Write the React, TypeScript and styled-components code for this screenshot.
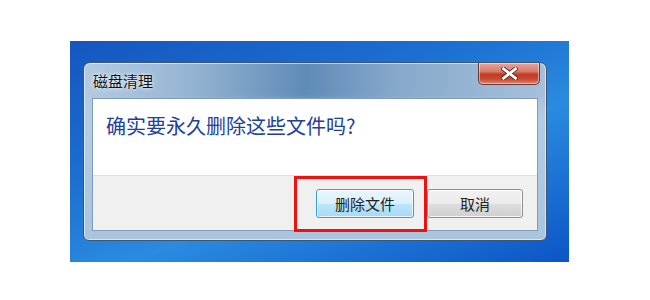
import React from "react";
import styled, { createGlobalStyle } from "styled-components";

const Global = createGlobalStyle`
  html, body { margin: 0; padding: 0; background: #ffffff; }
  body { font-family: "Noto Sans CJK SC", "Microsoft YaHei", sans-serif; }
`;

const Page = styled.div`
  width: 650px;
  height: 300px;
  padding: 41px 0 0 70px;
  box-sizing: border-box;
`;

const Desktop = styled.div`
  width: 499px;
  height: 221px;
  box-sizing: border-box;
  padding: 21px 0 0 13px;
  background: linear-gradient(160deg, #1556c0 0%, #1c6fd0 35%, #2a8be0 60%, #0c55c6 100%);
`;

const Window = styled.div`
  position: relative;
  width: 464px;
  height: 179px;
  box-sizing: border-box;
  border: 1px solid #3c5674;
  border-radius: 7px 7px 6px 6px;
  background:
    linear-gradient(180deg, rgba(255, 255, 255, 0) 0%, rgba(255, 255, 255, 0) 18%, rgba(180, 205, 230, 1) 30%, rgba(170, 196, 222, 1) 100%),
    linear-gradient(90deg, #b3cbe2 0%, #97b5d3 22%, #5f8bb8 48%, #87a9cb 68%, #a6c0db 100%);
  box-shadow: inset 0 0 0 1px rgba(255, 255, 255, 0.55);
  display: flex;
  flex-direction: column;
  padding: 0 8px 9px 8px;
`;

const TitleBar = styled.div`
  height: 35px;
  display: flex;
  align-items: flex-start;
  justify-content: space-between;
`;

const Title = styled.div`
  margin-top: 9px;
  margin-left: 1px;
  font-size: 15px;
  line-height: 17px;
  color: #111;
  text-shadow: 0 0 5px rgba(255, 255, 255, 0.95), 0 0 2px rgba(255, 255, 255, 0.8);
`;

const CloseButton = styled.div`
  width: 62px;
  height: 22px;
  margin-right: -2px;
  box-sizing: border-box;
  border: 1px solid #6b3a35;
  border-top: none;
  border-radius: 0 0 5px 5px;
  background: linear-gradient(180deg, #e8a59a 0%, #d77b6c 40%, #c23a22 55%, #c8503a 80%, #e28a70 100%);
  box-shadow: inset 0 0 0 1px rgba(255, 255, 255, 0.45);
  display: flex;
  align-items: center;
  justify-content: center;
`;

const Client = styled.div`
  flex: 1;
  display: flex;
  flex-direction: column;
  border: 1px solid #7f9db9;
  background: #ffffff;
`;

const Body = styled.div`
  height: 76px;
  box-sizing: border-box;
  padding: 14px 0 0 13px;
  font-size: 20px;
  line-height: 26px;
  color: #22409a;
`;

const Footer = styled.div`
  position: relative;
  flex: 1;
  background: #f0f0f0;
  border-top: 1px solid #dfdfdf;
  display: flex;
  justify-content: flex-end;
  align-items: flex-start;
  gap: 13px;
  padding: 13px 14px 0 0;
`;

const Button = styled.button<{ $primary?: boolean }>`
  width: ${(p) => (p.$primary ? "98px" : "96px")};
  height: 29px;
  box-sizing: border-box;
  border-radius: 3px;
  border: 1px solid ${(p) => (p.$primary ? "#3c9fd4" : "#8e8f8f")};
  background: ${(p) =>
    p.$primary
      ? "linear-gradient(180deg, #eaf6fd 0%, #d9f0fc 50%, #bee6fd 51%, #a7d9f5 100%)"
      : "linear-gradient(180deg, #f2f2f2 0%, #ebebeb 50%, #dddddd 51%, #cfcfcf 100%)"};
  box-shadow: inset 0 0 0 1px rgba(255, 255, 255, 0.75);
  font-family: "Noto Sans CJK SC", sans-serif;
  font-size: 15px;
  color: #222;
  padding: 0;
`;

const Highlight = styled.div`
  position: absolute;
  left: 201px;
  top: 0px;
  width: 133px;
  height: 56px;
  box-sizing: border-box;
  border: 3px solid #ee1111;
  pointer-events: none;
`;

export default function App() {
  return (
    <>
      <Global />
      <Page>
        <Desktop>
          <Window>
            <TitleBar>
              <Title>磁盘清理</Title>
              <CloseButton>
                <svg width="17" height="13" viewBox="0 0 17 13">
                  <path
                    d="M2.5 1.8 L14.5 11.2 M14.5 1.8 L2.5 11.2"
                    stroke="#4a2220"
                    strokeWidth="4.4"
                    strokeLinecap="square"
                  />
                  <path
                    d="M2.5 1.8 L14.5 11.2 M14.5 1.8 L2.5 11.2"
                    stroke="#ffffff"
                    strokeWidth="2.8"
                    strokeLinecap="square"
                  />
                </svg>
              </CloseButton>
            </TitleBar>
            <Client>
              <Body>确实要永久删除这些文件吗?</Body>
              <Footer>
                <Button $primary>删除文件</Button>
                <Button>取消</Button>
                <Highlight />
              </Footer>
            </Client>
          </Window>
        </Desktop>
      </Page>
    </>
  );
}
